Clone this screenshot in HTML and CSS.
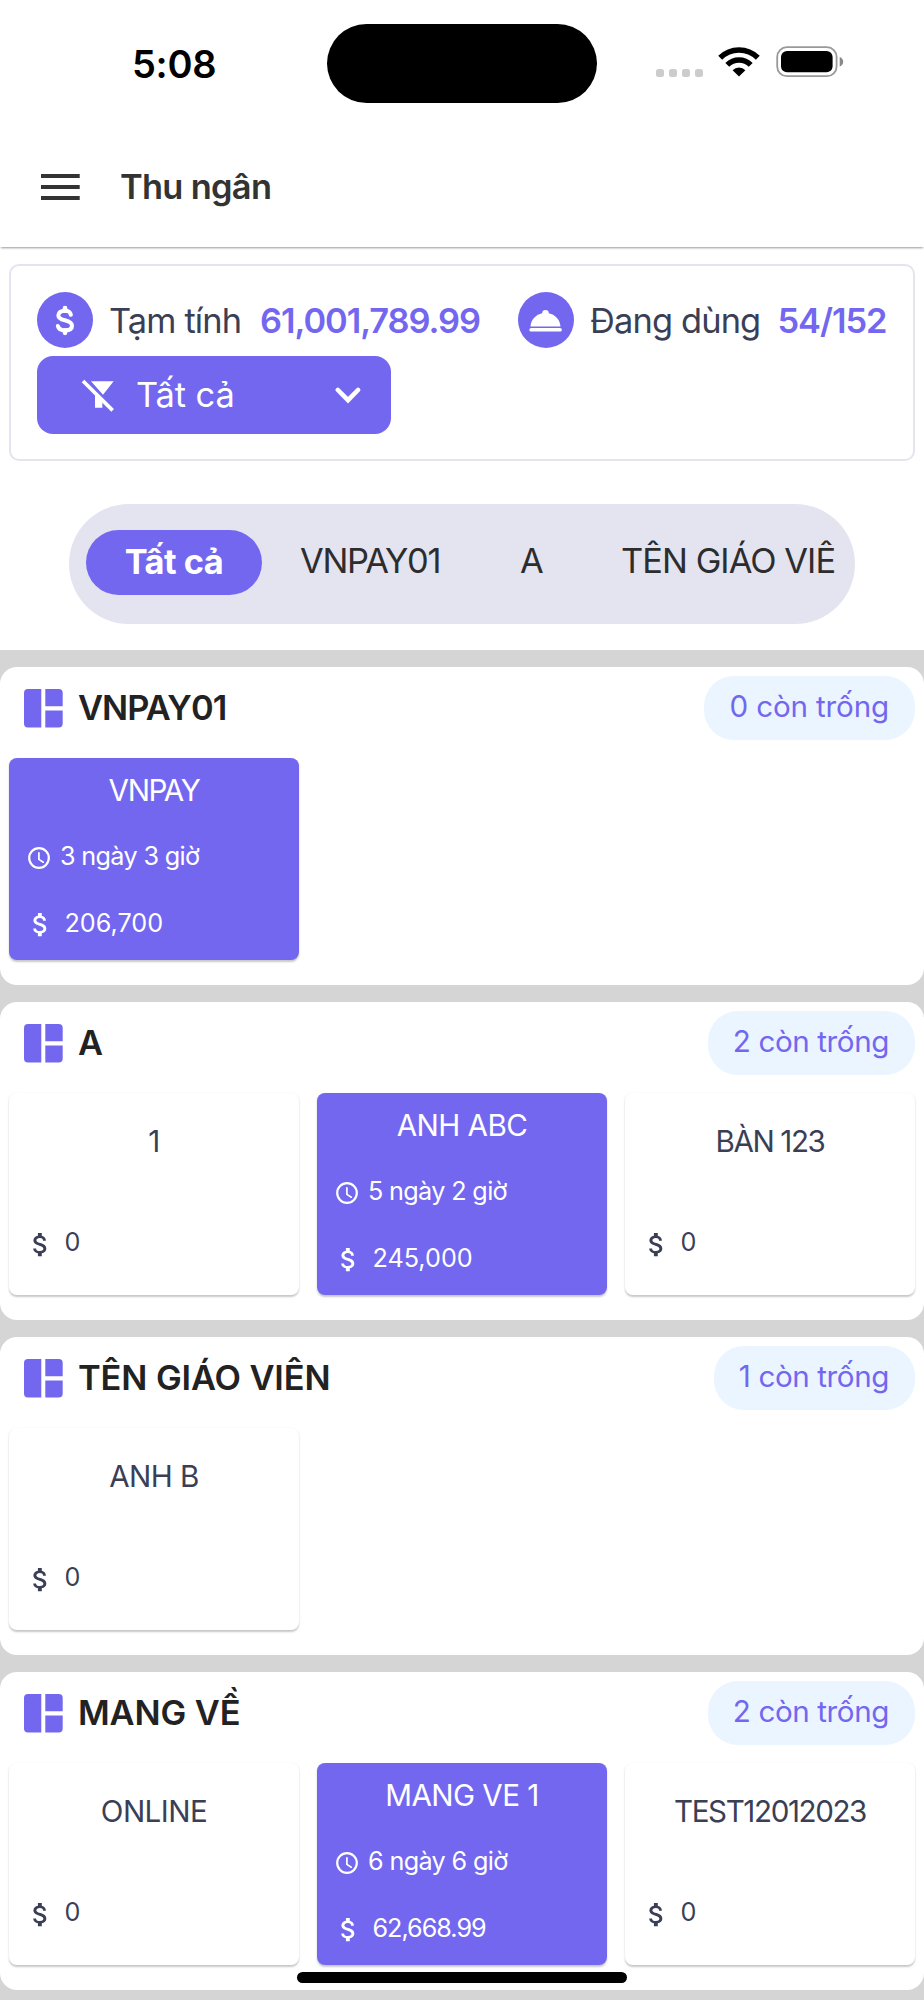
FILE: index.html
```html
<!DOCTYPE html>
<html lang="vi">
<head>
<meta charset="utf-8">
<title>Thu ngân</title>
<link rel="stylesheet" href="styles.css">
</head>
<body>
<svg width="0" height="0" class="defs" aria-hidden="true">
  <symbol id="i-dollar" viewBox="0 0 24 24"><path fill="currentColor" d="M11.8 10.9c-2.27-.59-3-1.2-3-2.15 0-1.09 1.01-1.85 2.7-1.85 1.78 0 2.44.85 2.5 2.1h2.21c-.07-1.72-1.12-3.3-3.21-3.81V3h-3v2.16c-1.94.42-3.5 1.68-3.5 3.61 0 2.31 1.91 3.46 4.7 4.13 2.5.6 3 1.48 3 2.41 0 .69-.49 1.79-2.7 1.79-2.06 0-2.87-.92-2.98-2.1h-2.2c.12 2.19 1.76 3.42 3.68 3.83V21h3v-2.15c1.95-.37 3.5-1.5 3.5-3.55 0-2.84-2.43-3.81-4.7-4.4z"/></symbol>
  <symbol id="i-layout" viewBox="0 0 39 39"><path fill="currentColor" d="M4 0H17.3V38.6H4A4 4 0 0 1 0 34.6V4A4 4 0 0 1 4 0ZM21.3 0H34.7A4 4 0 0 1 38.7 4V17.2H21.3ZM21.3 21.5H38.7V34.6A4 4 0 0 1 34.7 38.6H21.3Z"/></symbol>
  <symbol id="i-clock" viewBox="0 0 22 22"><g fill="none" stroke="currentColor" stroke-linecap="round" stroke-linejoin="round"><circle cx="11" cy="11" r="9.8" stroke-width="2.2"/><path stroke-width="1.7" d="M10.9 5.8V12.4L15.3 15.2"/></g></symbol>
</svg>

<div class="screen">
  <div class="status">
    <span class="status__time">5:08</span>
    <span class="status__island"></span>
    <span class="status__dots"><i></i><i></i><i></i><i></i></span>
    <svg class="status__wifi" viewBox="0 0 42 30">
      <g fill="none" stroke="#000" stroke-width="5.5"><path d="M2.2 10.8A26.6 26.6 0 0 1 39.8 10.8"/><path d="M9.3 17.9A16.5 16.5 0 0 1 32.7 17.9"/></g>
      <path d="M21 29.6L14.6 23.2A9 9 0 0 1 27.4 23.2Z"/>
    </svg>
    <svg class="status__battery" viewBox="0 0 68 32">
      <rect x="1.2" y="1.2" width="59.4" height="29" rx="9.6" fill="none" stroke="#999" stroke-width="1.8"/>
      <rect x="5" y="5" width="51.6" height="21.2" rx="6"/>
      <path fill="#888" d="M63.7 11C68.4 12.6 68.4 18.8 63.7 20.4Z"/>
    </svg>
  </div>

  <header class="appbar">
    <svg class="appbar__menu" viewBox="0 0 39 26"><path fill="#333" d="M0 0H38.7V4.1H0ZM0 11H38.7V15.1H0ZM0 21.9H38.7V26H0Z"/></svg>
    <h1 class="appbar__title">Thu ngân</h1>
  </header>

  <section class="summary">
    <div class="summary__row">
      <div class="stat stat--money">
        <span class="stat__icon"><svg width="39" height="39" viewBox="0 0 24 24"><g fill="none" stroke="#fff" stroke-linecap="round"><path stroke-width="2.5" d="M15.3 8.5C15 6.9 13.6 6 11.6 6C9.2 6 7.6 7.1 7.6 8.8C7.6 10.6 9 11.3 11.6 11.9C14.6 12.6 16 13.5 16 15.3C16 17.1 14.3 18.1 11.8 18.1C9.3 18.1 7.7 17.1 7.3 15.4"/><path stroke-width="2.9" d="M11.7 4.4V6M11.7 18V19.6"/></g></svg></span>
        <span class="stat__label">Tạm tính</span>
        <span class="stat__value">61,001,789.99</span>
      </div>
      <div class="stat stat--used">
        <span class="stat__icon"><svg width="34" height="26" viewBox="0 0 34 26"><path fill="#fff" d="M1.5 19.4C2 12.6 7 7.5 13.2 6.3A3.3 3.3 0 1 1 19.8 6.3C26 7.5 31 12.6 31.5 19.4Z"/><rect x=".4" y="20.9" width="32.4" height="3.7" rx="1.6" fill="#fff"/></svg></span>
        <span class="stat__label">Đang dùng</span>
        <span class="stat__value">54/152</span>
      </div>
    </div>
    <div class="filter">
      <svg class="filter__icon" viewBox="0 0 108 105"><path fill="#fff" d="M33 10H101L69 50ZM45 40L67 62V89H45Z"/><path stroke="#fff" stroke-width="11" d="M9 9L98 97"/></svg>
      <span class="filter__label">Tất cả</span>
      <svg class="filter__chevron" viewBox="0 0 26 17"><path fill="none" stroke="#fff" stroke-width="4.6" stroke-linecap="round" d="M2.9 3L13 13.2L23 3"/></svg>
    </div>
  </section>

  <nav class="chips">
    <span class="chip chip--active">Tất cả</span>
    <span class="chip chip--vnpay">VNPAY01</span>
    <span class="chip chip--short">A</span>
    <span class="chip">TÊN GIÁO VIÊ</span>
  </nav>

  <main class="areas">
    <section class="area">
      <div class="area__head">
        <svg class="area__icon"><use href="#i-layout"/></svg>
        <h2 class="area__name area__name--tight">VNPAY01</h2>
        <span class="badge badge--zero">0 còn trống</span>
      </div>
      <div class="tables">
        <div class="table table--busy">
          <div class="table__name t-tight">VNPAY</div>
          <div class="table__time"><svg><use href="#i-clock"/></svg>3 ngày 3 giờ</div>
          <div class="table__sum"><svg><use href="#i-dollar"/></svg>206,700</div>
        </div>
      </div>
    </section>

    <section class="area">
      <div class="area__head">
        <svg class="area__icon"><use href="#i-layout"/></svg>
        <h2 class="area__name">A</h2>
        <span class="badge">2 còn trống</span>
      </div>
      <div class="tables">
        <div class="table">
          <div class="table__name">1</div>
          <div class="table__sum"><svg><use href="#i-dollar"/></svg>0</div>
        </div>
        <div class="table table--busy">
          <div class="table__name">ANH ABC</div>
          <div class="table__time"><svg><use href="#i-clock"/></svg>5 ngày 2 giờ</div>
          <div class="table__sum"><svg><use href="#i-dollar"/></svg>245,000</div>
        </div>
        <div class="table">
          <div class="table__name t-tight">BÀN 123</div>
          <div class="table__sum"><svg><use href="#i-dollar"/></svg>0</div>
        </div>
      </div>
    </section>

    <section class="area">
      <div class="area__head">
        <svg class="area__icon"><use href="#i-layout"/></svg>
        <h2 class="area__name">TÊN GIÁO VIÊN</h2>
        <span class="badge">1 còn trống</span>
      </div>
      <div class="tables">
        <div class="table">
          <div class="table__name">ANH B</div>
          <div class="table__sum"><svg><use href="#i-dollar"/></svg>0</div>
        </div>
      </div>
    </section>

    <section class="area">
      <div class="area__head">
        <svg class="area__icon"><use href="#i-layout"/></svg>
        <h2 class="area__name">MANG VỀ</h2>
        <span class="badge">2 còn trống</span>
      </div>
      <div class="tables">
        <div class="table">
          <div class="table__name">ONLINE</div>
          <div class="table__sum"><svg><use href="#i-dollar"/></svg>0</div>
        </div>
        <div class="table table--busy">
          <div class="table__name">MANG VE 1</div>
          <div class="table__time"><svg><use href="#i-clock"/></svg>6 ngày 6 giờ</div>
          <div class="table__sum table__sum--long"><svg><use href="#i-dollar"/></svg>62,668.99</div>
        </div>
        <div class="table">
          <div class="table__name t-tight">TEST12012023</div>
          <div class="table__sum"><svg><use href="#i-dollar"/></svg>0</div>
        </div>
      </div>
    </section>
  </main>
  <div class="home-indicator"></div>
</div>
</body>
</html>
```
FILE: styles.css
```css
* { box-sizing: border-box; }
body {
  margin: 0;
  background: #fff;
  color: #3a3f56;
  font-family: Inter, "Open Sans", sans-serif;
  font-size: 34.4px;
  font-weight: 380;
  line-height: 1;
}
h1, h2 { margin: 0; font-size: inherit; font-weight: 600; }
svg { display: block; flex: none; }
.defs { position: absolute; }
.screen {
  position: relative;
  width: 924px;
  height: 2000px;
  overflow: hidden;
  white-space: nowrap;
}

/* Status bar */
.status { display: flex; align-items: center; height: 127px; padding-left: 132px; }
.status__time { width: 195px; font-size: 38px; font-weight: 600; color: #000; letter-spacing: -.3px; }
.status__island { width: 270px; height: 79px; border-radius: 40px; background: #000; }
.status__dots { display: flex; gap: 5px; margin: 19px 15px 0 59px; }
.status__dots i { width: 8px; height: 8px; border-radius: 2.5px; background: #ccc; }
.status__wifi { width: 42px; height: 30px; margin: 0 16px 4px 0; }
.status__battery { width: 68px; height: 32px; margin-bottom: 3px; }

/* App bar */
.appbar {
  display: flex;
  align-items: center;
  height: 120px;
  padding-left: 41px;
  box-shadow: 0 2px 2px -1px rgba(0, 0, 0, .4);
}
.appbar__menu { width: 39px; height: 26px; }
.appbar__title { margin-left: 40px; color: #333; letter-spacing: -.7px; }

/* Summary */
.summary {
  height: 197px;
  margin: 17px 9px 0;
  padding: 26px;
  border: 2px solid #e4e4f1;
  border-radius: 10px;
}
.summary__row { display: flex; }
.stat { display: flex; align-items: center; }
.stat--money { width: 481px; }
.stat__icon {
  display: flex;
  align-items: center;
  justify-content: center;
  width: 56px;
  height: 56px;
  border-radius: 50%;
  background: #7367f0;
}
.stat__label { margin-left: 16px; letter-spacing: -.85px; }
.stat__label, .stat__value { padding-top: 2px; }
.stat--money .stat__label { width: 151px; }
.stat--used .stat__label { width: 187.5px; }
.stat__value { color: #7367f0; font-weight: 600; letter-spacing: -1.05px; }
.filter {
  display: flex;
  align-items: center;
  width: 354px;
  height: 78px;
  margin-top: 8px;
  padding: 0 30px 0 43px;
  border-radius: 16px;
  background: #7367f0;
  color: #fff;
}
.filter__icon { width: 36px; height: 35px; }
.filter__label { margin-left: 20px; letter-spacing: -.1px; }
.filter__chevron { width: 26px; height: 17px; margin-left: auto; }

/* Area chips */
.chips {
  display: flex;
  align-items: center;
  height: 120px;
  margin: 43px 69px 26px;
  padding: 0 17px 5px;
  border-radius: 60px;
  background: #e4e4f1;
  color: #2d2d2d;
  overflow: hidden;
}
.chip { flex: none; padding: 0 38px; letter-spacing: -.95px; }
.chip--vnpay { width: 218px; letter-spacing: -1.3px; }
.chip--short { width: 103px; text-align: center; }
.chip--active {
  width: 176px;
  height: 65px;
  margin-top: 1px;
  padding: 0;
  border-radius: 33px;
  background: #7367f0;
  color: #fff;
  font-weight: 700;
  line-height: 63px;
  letter-spacing: -.5px;
  text-align: center;
}

/* Areas */
.areas {
  display: flex;
  flex-direction: column;
  gap: 17px;
  height: 1350px;
  padding-top: 17px;
  background: #d5d5d5;
}
.area {
  flex: none;
  height: 318px;
  padding: 9px 9px 0;
  border-radius: 17px;
  background: #fff;
}
.area__head { display: flex; align-items: center; height: 64px; padding-left: 15px; }
.area__icon { width: 39px; height: 39px; color: #7367f0; }
.area__name { margin-left: 15px; color: #222; letter-spacing: -.1px; }
.area__name--tight { letter-spacing: -.9px; }
.badge {
  height: 64px;
  margin-left: auto;
  padding: 0 26px 0 25px;
  border-radius: 30px;
  background: #eaf5ff;
  color: #7367f0;
  font-size: 29.6px;
  line-height: 61px;
  letter-spacing: -.4px;
}
.badge--zero { letter-spacing: -.15px; }

/* Tables */
.tables { display: grid; grid-template-columns: repeat(3, 290px); gap: 18px; margin-top: 17.5px; }
.table {
  display: grid;
  grid-template-rows: 98px 104px;
  align-items: center;
  height: 202px;
  border-radius: 8px;
  background: #fff;
  box-shadow: 0 1.5px 2px rgba(0, 0, 0, .22);
}
.table--busy { grid-template-rows: repeat(3, 66.2px); background: #7367f0; color: #fff; }
.table__name { font-size: 29.6px; letter-spacing: -.55px; text-align: center; }
.t-tight { letter-spacing: -1.4px; }
.table__time, .table__sum { display: flex; align-items: center; font-size: 25.2px; }
.table__time { padding-left: 19px; letter-spacing: -.65px; }
.table__time svg { width: 22px; height: 22px; margin: 3px 10px 0 0; }
.table__sum { padding: 1px 0 0 16px; letter-spacing: 0; }
.table__sum svg { width: 31px; height: 31px; margin: 2px 8.5px 0 0; }
.table__sum--long { letter-spacing: -1px; }

/* Home indicator floats over the list */
.home-indicator {
  position: absolute;
  left: 297px;
  top: 1972px;
  width: 330px;
  height: 11px;
  border-radius: 6px;
  background: #000;
}
```
